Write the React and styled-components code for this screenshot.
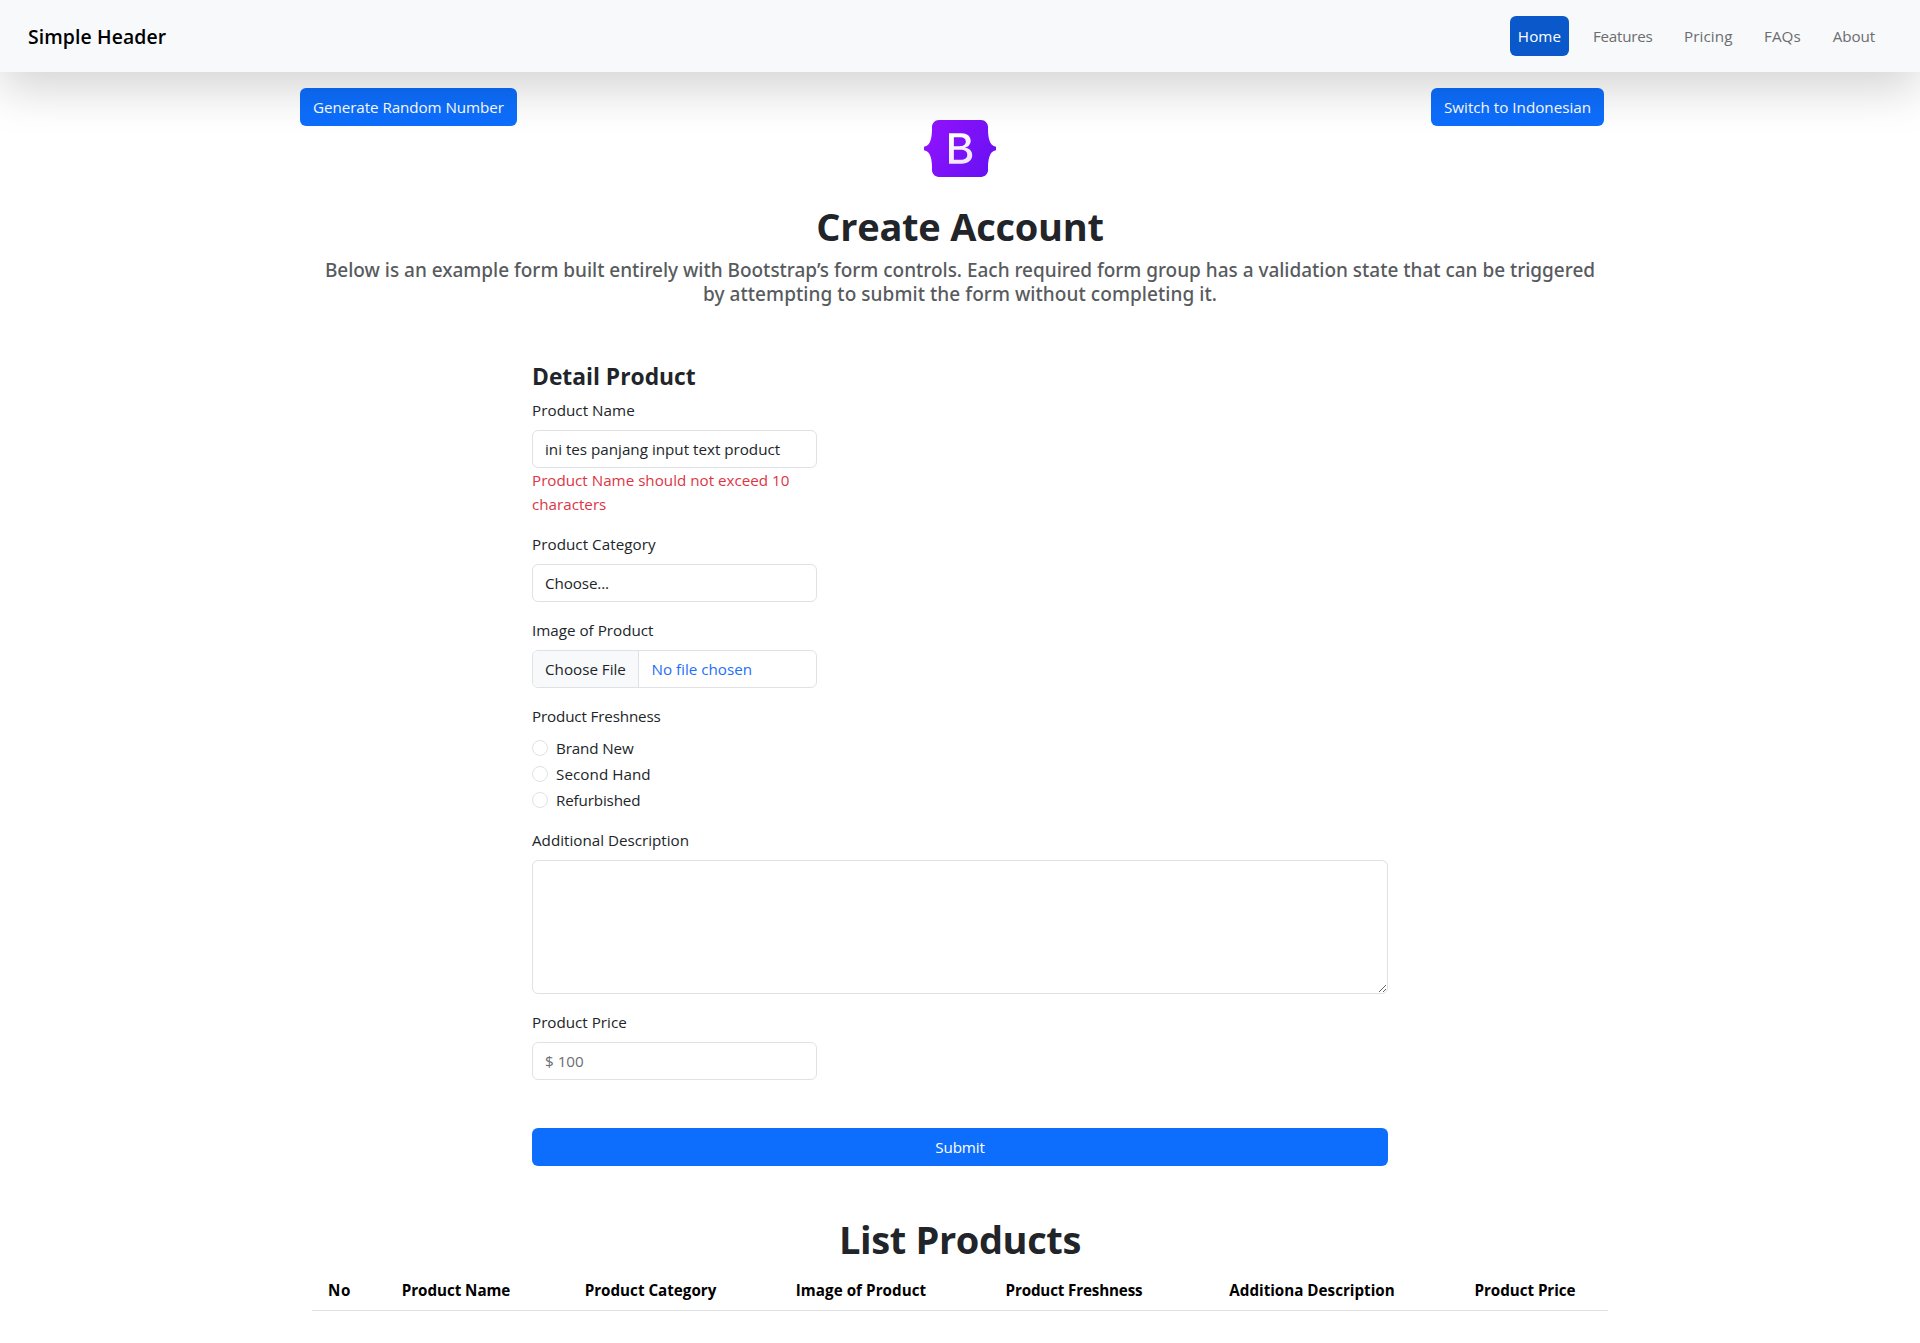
import React from "react";
import styled, { createGlobalStyle } from "styled-components";

const Global = createGlobalStyle`
  *, *::before, *::after { box-sizing: border-box; }
  body {
    margin: 0;
    background: #fff;
    color: #212529;
    font: 400 15.2px/24px "Open Sans", "Noto Sans", sans-serif;
  }
  h1, h3, h5, p { margin: 0; }
  button, input, select, textarea { font: inherit; color: inherit; letter-spacing: inherit; }
`;

const Header = styled.header`
  position: relative;
  z-index: 1;
  display: flex;
  align-items: flex-start;
  justify-content: space-between;
  height: 72px;
  padding: 16px 44px 16px 28px;
  background: #f8f9fb;
  box-shadow: 0 16px 48px rgba(0, 0, 0, 0.175);
`;

const Brand = styled.span`
  color: #000;
  font-size: 19.4px;
  font-weight: 600;
  line-height: 41px;
  letter-spacing: 0.1px;
`;

const Nav = styled.nav`
  display: flex;
  gap: 32px;
`;

const NavLink = styled.a`
  width: ${(p) => p.$width}px;
  height: 40px;
  margin-right: ${(p) => (p.$active ? -8 : 0)}px;
  border-radius: 6px;
  background: ${(p) => (p.$active ? "#0a58ca" : "transparent")};
  color: ${(p) => (p.$active ? "#fff" : "#6b6d6f")};
  line-height: 40px;
  text-align: center;
  white-space: nowrap;
  letter-spacing: ${(p) => p.$track || 0}px;
`;

const Button = styled.button`
  width: ${(p) => p.$width};
  height: 38px;
  padding: 0;
  border: 0;
  border-radius: 6px;
  background: #0d6efd;
  color: #fff;
  text-align: center;
  white-space: nowrap;
  letter-spacing: ${(p) => p.$track || 0}px;
`;

const Container = styled.div`
  width: 1320px;
  margin: 0 auto;
`;

const TopRow = styled.div`
  display: grid;
  grid-template-columns: 1fr auto 1fr;
  align-items: start;
  padding-top: 16px;
`;

const TopRight = styled.div`
  display: flex;
  justify-content: flex-end;
  padding-right: 16px;
`;

const Logo = styled.svg`
  display: block;
  width: 72px;
  height: 57px;
  margin-top: 32px;
`;

const Title = styled.h1`
  margin-top: ${(p) => p.$top}px;
  padding-top: 2px;
  font-size: 38px;
  font-weight: 700;
  line-height: 46px;
  letter-spacing: ${(p) => p.$track}px;
  text-align: center;
`;

const Lead = styled.h5`
  margin-top: 8px;
  padding-top: 1px;
  color: #585b5e;
  font-family: "Noto Sans", "Open Sans", sans-serif;
  font-size: 19px;
  font-weight: 500;
  line-height: 24px;
  text-align: center;
`;

const LeadLine = styled.span`
  display: block;
  white-space: nowrap;
  letter-spacing: ${(p) => p.$track}px;
`;

const Form = styled.form`
  width: 856px;
  margin: 56px auto 0;
`;

const FormTitle = styled.h3`
  margin-bottom: 8px;
  padding-top: 2px;
  font-size: 22.8px;
  font-weight: 700;
  line-height: 26px;
`;

const Field = styled.div`
  width: ${(p) => (p.$wide ? "100%" : "285px")};
  margin-bottom: 16px;
`;

const Label = styled.label`
  display: block;
  margin-bottom: 8px;
  letter-spacing: ${(p) => p.$track || 0}px;
`;

const Input = styled.input`
  display: block;
  width: 100%;
  height: 38px;
  padding: 6px 12px;
  border: 1px solid #dee2e6;
  border-radius: 6px;
  outline: 0;
  background: #fff;
  &::placeholder { color: #6a6e72; opacity: 1; }
`;

const Select = styled.select`
  display: block;
  width: 100%;
  height: 38px;
  padding: 6px 12px;
  border: 1px solid #dee2e6;
  border-radius: 6px;
  background: #fff;
  letter-spacing: -0.1px;
  appearance: none;
`;

const ErrorText = styled.div`
  color: #dc3545;
`;

const FilePicker = styled.div`
  display: flex;
  height: 38px;
  overflow: hidden;
  border: 1px solid #dee2e6;
  border-radius: 6px;
  line-height: 36px;
`;

const FileButton = styled.span`
  width: 106px;
  padding-left: 12px;
  border-right: 1px solid #dee2e6;
  background: #f8f9fb;
`;

const FileName = styled.span`
  padding-left: 12.5px;
  color: #1d6ffa;
`;

const Choice = styled.label`
  display: flex;
  gap: 8px;
  height: 24px;
  margin-bottom: 2px;
  letter-spacing: ${(p) => p.$track || 0}px;
  &:last-child { margin-bottom: 0; }
`;

const Radio = styled.input`
  width: 16px;
  height: 16px;
  margin: 4px 0 0;
  border: 1px solid #dee2e6;
  border-radius: 50%;
  background: #fff;
  appearance: none;
`;

const Textarea = styled.textarea`
  display: block;
  width: 100%;
  height: 134px;
  padding: 6px 12px;
  border: 1px solid #dee2e6;
  border-radius: 6px;
  resize: vertical;
`;

const Actions = styled.div`
  padding-top: 32px;
`;

const Table = styled.table`
  width: 1296px;
  margin: 8px auto 0;
  border-collapse: separate;
  border-spacing: 0;
  table-layout: fixed;
`;

const Th = styled.th`
  width: ${(p) => p.$width}px;
  height: 41px;
  padding: 8px 0;
  border-bottom: 1px solid #dee2e6;
  color: #000;
  font-weight: 700;
  text-align: center;
  white-space: nowrap;
  letter-spacing: ${(p) => p.$track || 0}px;
`;

const links = [
  { text: "Home", width: 59, active: true, track: 0.1 },
  { text: "Features", width: 59, track: -0.25 },
  { text: "Pricing", width: 48, track: 0.1 },
  { text: "FAQs", width: 36, track: 0.05 },
  { text: "About", width: 44, track: -0.08 },
];

const conditions = [
  { text: "Brand New", track: -0.12 },
  { text: "Second Hand", track: 0.06 },
  { text: "Refurbished", track: -0.15 },
];

const columns = [
  { text: "No", width: 55, track: 0.5 },
  { text: "Product Name", width: 178, track: -0.05 },
  { text: "Product Category", width: 211 },
  { text: "Image of Product", width: 210, track: 0.05 },
  { text: "Product Freshness", width: 216, track: -0.16 },
  { text: "Additiona Description", width: 260 },
  { text: "Product Price", width: 166, track: -0.05 },
];

function BootstrapLogo() {
  return (
    <Logo viewBox="0 0 512 408" preserveAspectRatio="none" fill="none" aria-label="Bootstrap">
      <defs>
        <linearGradient id="badge" x1="76.079" y1="10.798" x2="523.48" y2="365.945" gradientUnits="userSpaceOnUse">
          <stop stopColor="#9013fe" />
          <stop offset="1" stopColor="#6610f2" />
        </linearGradient>
        <linearGradient id="letter" x1="193.508" y1="109.74" x2="289.514" y2="278.872" gradientUnits="userSpaceOnUse">
          <stop stopColor="#fff" />
          <stop offset="1" stopColor="#f1e5fc" />
        </linearGradient>
      </defs>
      <path
        fill="url(#badge)"
        d="M56.482 53.32C55.516 25.58 77.128 0 106.342 0h299.353c29.214 0 50.826 25.58 49.86 53.32-.927 26.647.276 61.165 8.966 89.31 8.715 28.232 23.411 46.077 47.48 48.37v26c-24.069 2.293-38.765 20.138-47.48 48.37-8.69 28.145-9.893 62.663-8.965 89.311.965 27.739-20.647 53.319-49.861 53.319H106.342c-29.214 0-50.826-25.58-49.86-53.319.927-26.648-.276-61.166-8.966-89.311C38.8 237.138 24.07 219.293 0 217v-26c24.069-2.293 38.765-20.138 47.481-48.37 8.69-28.145 9.894-62.663 9.001-89.31z"
      />
      <path
        fill="url(#letter)"
        d="M267.103 312.457c47.297 0 75.798-23.158 75.798-61.355 0-28.873-20.336-49.776-50.532-53.085v-1.203c22.185-3.609 39.594-24.211 39.594-47.219 0-32.783-25.882-54.138-65.322-54.138h-88.74v217h89.202zm-54.692-189.48h45.911c24.958 0 39.131 11.128 39.131 31.279 0 21.505-16.484 33.535-46.372 33.535h-38.67v-64.814zm0 161.961v-71.431h45.602c32.661 0 49.612 12.03 49.612 35.49 0 23.459-16.484 35.941-47.605 35.941h-47.609z"
      />
    </Logo>
  );
}

export default function App() {
  return (
    <>
      <Global />
      <Header>
        <Brand>Simple Header</Brand>
        <Nav>
          {links.map((l) => (
            <NavLink key={l.text} $width={l.width} $active={l.active} $track={l.track}>
              {l.text}
            </NavLink>
          ))}
        </Nav>
      </Header>
      <Container>
        <TopRow>
          <div>
            <Button type="button" $width="217px" $track={-0.07}>Generate Random Number</Button>
          </div>
          <BootstrapLogo />
          <TopRight>
            <Button type="button" $width="173px">Switch to Indonesian</Button>
          </TopRight>
        </TopRow>
        <Title $top={24} $track={-0.24}>Create Account</Title>
        <Lead>
          <LeadLine $track={-0.02}>
            Below is an example form built entirely with Bootstrap’s form controls. Each required form group has a validation state that can be triggered
          </LeadLine>
          <LeadLine $track={0.06}>by attempting to submit the form without completing it.</LeadLine>
        </Lead>
        <Form onSubmit={(e) => e.preventDefault()}>
          <FormTitle>Detail Product</FormTitle>
          <Field>
            <Label $track={0.05}>Product Name</Label>
            <Input defaultValue="ini tes panjang input text product" />
            <ErrorText>Product Name should not exceed 10 characters</ErrorText>
          </Field>
          <Field>
            <Label $track={0.05}>Product Category</Label>
            <Select defaultValue="">
              <option value="">Choose...</option>
            </Select>
          </Field>
          <Field>
            <Label>Image of Product</Label>
            <FilePicker>
              <FileButton>Choose File</FileButton>
              <FileName>No file chosen</FileName>
            </FilePicker>
          </Field>
          <Field>
            <Label $track={-0.15}>Product Freshness</Label>
            {conditions.map((c) => (
              <Choice key={c.text} $track={c.track}>
                <Radio type="radio" name="freshness" />
                {c.text}
              </Choice>
            ))}
          </Field>
          <Field $wide>
            <Label>Additional Description</Label>
            <Textarea />
          </Field>
          <Field>
            <Label>Product Price</Label>
            <Input placeholder="$ 100" />
          </Field>
          <Actions>
            <Button type="submit" $width="100%" $track={-0.15}>Submit</Button>
          </Actions>
        </Form>
        <Title $top={48} $track={-0.38}>List Products</Title>
        <Table>
          <thead>
            <tr>
              {columns.map((c) => (
                <Th key={c.text} $width={c.width} $track={c.track}>{c.text}</Th>
              ))}
            </tr>
          </thead>
        </Table>
      </Container>
    </>
  );
}
